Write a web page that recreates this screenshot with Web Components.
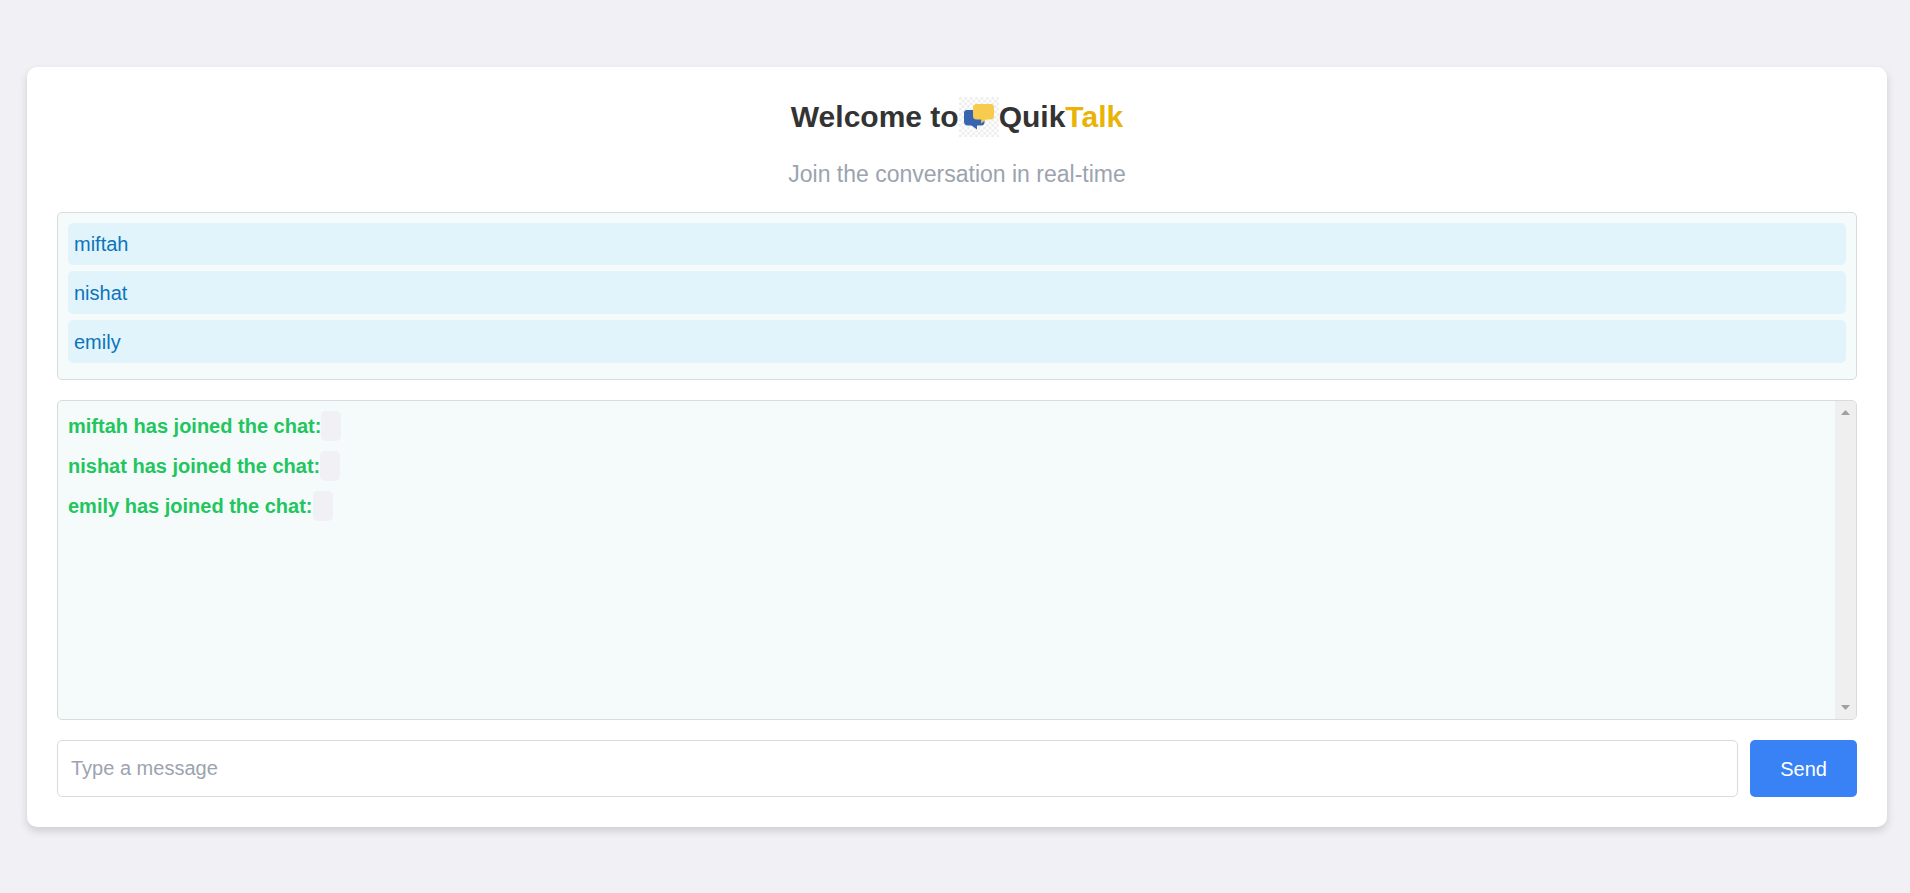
<!DOCTYPE html>
<html lang="en">
<head>
<meta charset="utf-8">
<title>QuikTalk</title>
<style>
  body { margin: 0; background: #f0f0f5; font-family: "Liberation Sans", Arial, sans-serif; font-size: 20px; line-height: 30px; color: #333; }
</style>
</head>
<body>
<chat-card>
  <chat-heading slot="header"></chat-heading>
  <user-list>
    <user-item>miftah</user-item>
    <user-item>nishat</user-item>
    <user-item>emily</user-item>
  </user-list>
  <message-log>
    <chat-message>miftah has joined the chat:</chat-message>
    <chat-message>nishat has joined the chat:</chat-message>
    <chat-message>emily has joined the chat:</chat-message>
  </message-log>
  <message-form></message-form>
</chat-card>
<script>
  const define = (name, markup) => {
    const template = document.createElement('template');
    template.innerHTML = markup;
    customElements.define(name, class extends HTMLElement {
      constructor() {
        super();
        this.attachShadow({ mode: 'open' }).append(template.content.cloneNode(true));
      }
    });
  };

  define('chat-card', `
    <style>
      :host { display: flex; align-items: center; min-height: 100vh; box-sizing: border-box; padding: 20px 23px 20px 27px; }
      main { flex: 1; min-width: 0; box-sizing: border-box; padding: 30px; background: #fff; border-radius: 10px; box-shadow: 0 4px 8px rgba(0,0,0,.15); }
      .body { display: flex; flex-direction: column; gap: 20px; }
    </style>
    <main><slot name="header"></slot><div class="body"><slot></slot></div></main>`);

  define('quik-logo', `
    <style>
      :host { display: block; width: 40px; height: 40px; }
      svg { display: block; width: 100%; height: 100%; }
    </style>
    <svg viewBox="0 0 40 40" aria-hidden="true">
      <defs><pattern id="check" width="5.4" height="5.4" patternUnits="userSpaceOnUse">
        <path d="M0 0h2.7v2.7H0zM2.7 2.7h2.7v2.7H2.7z" fill="#eee"/></pattern></defs>
      <path d="M0 0h40v40H0z" fill="#fff"/><path d="M0 0h40v40H0z" fill="url(#check)"/>
      <path d="M8 13h14a3 3 0 0 1 3.500 3v9a3.500 3.500 0 0 1-3.500 3.500H18V32.500L12.500 28.500H9A4 4 0 0 1 5 24.500V16a3 3 0 0 1 3-3z" fill="#3764b0"/>
      <path d="M17.500 7H31.500a3.500 3.500 0 0 1 3.500 3.500v8.500a3.500 3.500 0 0 1-3.500 3.500H27L22.200 26.500V22.500H17.500a3.500 3.500 0 0 1-3.500-3.500V10.500A3.500 3.500 0 0 1 17.500 7z" fill="#f6cb4e"/>
    </svg>`);

  define('chat-heading', `
    <style>
      :host { display: block; text-align: center; }
      h1 { display: flex; justify-content: center; align-items: center; margin: 0 0 20px; font-size: 30px; line-height: 40px; }
      .accent { color: #eab308; }
      p { margin: 0 0 20px; font-size: 23px; line-height: 35px; color: #9ca3af; }
    </style>
    <h1>Welcome to<quik-logo></quik-logo>Quik<span class="accent">Talk</span></h1>
    <p>Join the conversation in real-time</p>`);

  define('user-list', `
    <style>
      :host { display: grid; grid-auto-rows: 1fr; gap: 6px; box-sizing: border-box; min-height: 168px; padding: 10px 10px 16px; border: 1px solid #d9dcdc; border-radius: 5px; background: #f5fbfb; }
    </style><slot></slot>`);

  define('user-item', `
    <style>
      :host { display: flex; align-items: center; padding: 1px 6px 0; border-radius: 5px; background: #e1f4fb; color: #0b74bb; }
    </style><slot></slot>`);

  define('message-log', `
    <style>
      :host { display: flex; box-sizing: border-box; min-height: 320px; border: 1px solid #d9dcdc; border-radius: 5px; background: #f5fbfb; overflow: hidden; }
      .messages { flex: 1; display: flex; flex-direction: column; gap: 10px; padding: 10px; }
      .track { width: 21px; box-sizing: border-box; padding: 9px 0; background: #efefef; display: flex; flex-direction: column; justify-content: space-between; align-items: center; }
      svg { display: block; width: 9px; height: 5px; fill: #a0a0a0; }
    </style>
    <div class="messages"><slot></slot></div>
    <div class="track" aria-hidden="true">
      <svg viewBox="0 0 9 5"><path d="M0 5 4.500 0 9 5z"/></svg>
      <svg viewBox="0 0 9 5"><path d="M0 0 4.500 5 9 0z"/></svg>
    </div>`);

  define('chat-message', `
    <style>
      :host { display: flex; }
      strong { color: #22c55e; }
      .text { padding: 5px 10px; border-radius: 5px; background: #f0f0f5; }
    </style>
    <strong><slot></slot></strong><span class="text"></span>`);

  define('message-form', `
    <style>
      :host { display: block; }
      form { display: flex; gap: 12px; }
      input, button { font: inherit; box-sizing: border-box; height: 57px; border-radius: 5px; margin: 0; }
      input { flex: 1; min-width: 0; padding: 1px 13px 0; border: 1px solid #d9dcdc; background: #fff; color: #333; }
      input::placeholder { color: #9ca3af; opacity: 1; }
      button { padding: 1px 30px 0; border: 0; background: #3882f6; color: #fff; }
    </style>
    <form onsubmit="return false">
      <input type="text" placeholder="Type a message" aria-label="Type a message">
      <button type="submit">Send</button>
    </form>`);
</script>
</body>
</html>
